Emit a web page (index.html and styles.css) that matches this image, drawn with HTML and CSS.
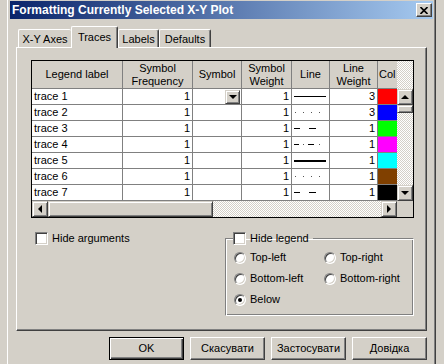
FILE: index.html
```html
<!DOCTYPE html>
<html lang="en">
<head>
    <meta charset="UTF-8">
    <title>Formatting Currently Selected X-Y Plot</title>
    <link rel="stylesheet" href="styles.css">
</head>
<body>
<div class="window">
    <div class="titlebar">
        <span class="title">Formatting Currently Selected X-Y Plot</span>
        <span class="close">
            <svg width="8" height="7" viewBox="0 0 8 7"><path d="M0.5 0 L7.5 7 M7.5 0 L0.5 7" stroke="#000" stroke-width="1.6"/></svg>
        </span>
    </div>

    <div class="tabs">
        <div class="tab tab-xy">X-Y Axes</div>
        <div class="tab tab-traces active">Traces</div>
        <div class="tab tab-labels">Labels</div>
        <div class="tab tab-defaults">Defaults</div>
    </div>

    <div class="panel">
        <div class="grid">
            <div class="grid-main">
                <div class="cells">
                    <div class="hd">Legend label</div>
                    <div class="hd">Symbol<br>Frequency</div>
                    <div class="hd">Symbol</div>
                    <div class="hd">Symbol<br>Weight</div>
                    <div class="hd">Line</div>
                    <div class="hd">Line<br>Weight</div>
                    <div class="hd hd-cut">Col</div>

                    <div class="c">trace 1</div><div class="c num">1</div>
                    <div class="c sym"><span class="drop"><i class="arr-down"></i></span></div>
                    <div class="c num">1</div>
                    <div class="c ln"><svg width="36" height="15"><line x1="2" y1="7.5" x2="34" y2="7.5" stroke="#000"/></svg></div>
                    <div class="c num">3</div><div class="c swatch" style="background:#ff0000"></div>

                    <div class="c">trace 2</div><div class="c num">1</div><div class="c"></div><div class="c num">1</div>
                    <div class="c ln"><svg width="36" height="15"><g fill="#555"><rect x="3" y="7" width="1" height="1"/><rect x="11" y="7" width="1" height="1"/><rect x="19" y="7" width="1" height="1"/><rect x="27" y="7" width="1" height="1"/></g></svg></div>
                    <div class="c num">3</div><div class="c swatch" style="background:#0000ff"></div>

                    <div class="c">trace 3</div><div class="c num">1</div><div class="c"></div><div class="c num">1</div>
                    <div class="c ln"><svg width="36" height="15"><g fill="#000"><rect x="2" y="7" width="6" height="1"/><rect x="17" y="7" width="7" height="1"/></g></svg></div>
                    <div class="c num">1</div><div class="c swatch" style="background:#00ff00"></div>

                    <div class="c">trace 4</div><div class="c num">1</div><div class="c"></div><div class="c num">1</div>
                    <div class="c ln"><svg width="36" height="15"><g fill="#000"><rect x="2" y="7" width="5" height="1"/><rect x="16" y="7" width="6" height="1"/></g><g fill="#555"><rect x="11" y="7" width="1" height="1"/><rect x="27" y="7" width="1" height="1"/></g></svg></div>
                    <div class="c num">1</div><div class="c swatch" style="background:#ff00ff"></div>

                    <div class="c">trace 5</div><div class="c num">1</div><div class="c"></div><div class="c num">1</div>
                    <div class="c ln"><svg width="36" height="15"><rect x="2" y="7" width="32" height="2" fill="#000"/></svg></div>
                    <div class="c num">1</div><div class="c swatch" style="background:#00ffff"></div>

                    <div class="c">trace 6</div><div class="c num">1</div><div class="c"></div><div class="c num">1</div>
                    <div class="c ln"><svg width="36" height="15"><g fill="#555"><rect x="3" y="7" width="1" height="1"/><rect x="11" y="7" width="1" height="1"/><rect x="19" y="7" width="1" height="1"/><rect x="27" y="7" width="1" height="1"/></g></svg></div>
                    <div class="c num">1</div><div class="c swatch" style="background:#804000"></div>

                    <div class="c">trace 7</div><div class="c num">1</div><div class="c"></div><div class="c num">1</div>
                    <div class="c ln"><svg width="36" height="15"><g fill="#000"><rect x="2" y="7" width="6" height="1"/><rect x="17" y="7" width="7" height="1"/></g></svg></div>
                    <div class="c num">1</div><div class="c swatch" style="background:#000000"></div>
                </div>
                <div class="vscroll">
                    <div class="track top-track"></div>
                    <span class="sbtn"><i class="arr-up"></i></span>
                    <span class="thumb-v"></span>
                    <div class="track"></div>
                    <span class="sbtn"><i class="arr-down"></i></span>
                </div>
            </div>
            <div class="hscroll">
                <span class="sbtn"><i class="arr-left"></i></span>
                <span class="thumb-h"></span>
                <div class="track"></div>
                <span class="sbtn"><i class="arr-right"></i></span>
                <span class="corner"></span>
            </div>
        </div>

        <div class="options">
            <label class="check"><span class="box"></span>Hide arguments</label>
            <fieldset class="group">
                <legend class="check"><span class="box"></span>Hide legend</legend>
                <div class="radios">
                    <label class="radio"><span class="dot"></span>Top-left</label>
                    <label class="radio"><span class="dot"></span>Top-right</label>
                    <label class="radio"><span class="dot"></span>Bottom-left</label>
                    <label class="radio"><span class="dot"></span>Bottom-right</label>
                    <label class="radio"><span class="dot on"></span>Below</label>
                </div>
            </fieldset>
        </div>
    </div>

    <div class="buttons">
        <span class="btn default">OK</span>
        <span class="btn">Скасувати</span>
        <span class="btn">Застосувати</span>
        <span class="btn">Довідка</span>
    </div>
</div>
</body>
</html>
```

FILE: styles.css
```css
body {
    margin: 0;
    background-color: #d4d0c8;
    font-family: "Liberation Sans", Arial, sans-serif;
    font-size: 11px;
    line-height: 13px;
    color: #000;
}

.window {
    margin-left: 7px;
    width: 429px;
    height: 364px;
    box-sizing: border-box;
    border-left: 1px solid #fff;
    border-right: 1px solid #404040;
    box-shadow: inset -1px 0 #808080;
    padding: 1px 2px 0 2px;
}

.titlebar {
    height: 18px;
    display: flex;
    align-items: center;
    justify-content: space-between;
    background: linear-gradient(to right, #0a246a, #a6caf0);
}

.title {
    color: #fff;
    font-weight: bold;
    font-size: 12px;
    padding-left: 2px;
}

.close {
    width: 16px;
    height: 14px;
    margin-right: 1px;
    box-sizing: border-box;
    display: flex;
    align-items: center;
    justify-content: center;
    background-color: #d4d0c8;
    border: 1px solid;
    border-color: #fff #404040 #404040 #fff;
    box-shadow: inset -1px -1px #808080;
}

/* tabs */
.tabs {
    display: flex;
    align-items: flex-end;
    height: 21px;
    margin: 7px 0 0 8px;
}

.tab {
    height: 18px;
    box-sizing: border-box;
    text-align: center;
    padding-top: 3px;
    border-top: 1px solid #fff;
    border-left: 1px solid #fff;
    border-right: 1px solid #404040;
    box-shadow: inset -1px 0 #808080;
    border-radius: 2px 2px 0 0;
}

.tab-xy { width: 53px; border-right: none; box-shadow: none; }
.tab-traces { width: 47px; }
.tab-labels { width: 41px; }
.tab-defaults { width: 52px; }

.tab.active {
    height: 22px;
    margin-bottom: -1px;
    padding-top: 4px;
    background-color: #d4d0c8;
    position: relative;
    z-index: 1;
}

.panel {
    margin-left: 6px;
    width: 411px;
    height: 284px;
    box-sizing: border-box;
    border: 1px solid;
    border-color: #fff #404040 #404040 #fff;
    box-shadow: inset -1px -1px #808080;
    padding: 12px 0 0 14px;
}

/* grid */
.grid {
    width: 383px;
    border: 1px solid #000;
    box-sizing: border-box;
}

.grid-main {
    display: flex;
}

.cells {
    display: grid;
    grid-template-columns: 90px 69px 48px 49px 37px 47px 19px;
    grid-template-rows: 27px repeat(7, 15px);
    gap: 1px;
    padding-bottom: 1px;
    background-color: #808080;
    width: 365px;
}

.hd {
    background-color: #d4d0c8;
    display: flex;
    align-items: center;
    justify-content: center;
    text-align: center;
    white-space: nowrap;
}

.hd-cut {
    justify-content: flex-start;
    padding-left: 1px;
}

.c {
    background-color: #fff;
    padding-left: 2px;
    line-height: 15px;
    white-space: nowrap;
    overflow: hidden;
}

.c.num {
    text-align: right;
    padding: 0 2px 0 0;
}

.c.sym {
    display: flex;
    justify-content: flex-end;
    align-items: center;
    padding-right: 1px;
}

.c.ln {
    padding: 0;
}

.c.ln svg {
    display: block;
}

.c.swatch {
    padding: 0;
}

.drop, .sbtn {
    box-sizing: border-box;
    display: flex;
    align-items: center;
    justify-content: center;
    background-color: #d4d0c8;
    border: 1px solid;
    border-color: #d4d0c8 #404040 #404040 #d4d0c8;
    box-shadow: inset 1px 1px #fff, inset -1px -1px #808080;
}

.drop {
    width: 15px;
    height: 14px;
}

.arr-down, .arr-up, .arr-left, .arr-right {
    width: 0;
    height: 0;
    border: 4px solid transparent;
}

.arr-down { border-top-color: #000; border-bottom-width: 0; }
.arr-up { border-bottom-color: #000; border-top-width: 0; }
.arr-left { border-right-color: #000; border-left-width: 0; }
.arr-right { border-left-color: #000; border-right-width: 0; }

.vscroll {
    width: 16px;
    display: flex;
    flex-direction: column;
}

.vscroll .sbtn {
    height: 16px;
}

.track {
    flex: 1;
    background: repeating-conic-gradient(#fff 0 25%, #d4d0c8 0 50%) 0 0 / 2px 2px;
}

.top-track {
    flex: none;
    height: 28px;
}

.thumb-v {
    height: 8px;
    box-sizing: border-box;
    background-color: #d4d0c8;
    border: 1px solid;
    border-color: #d4d0c8 #404040 #404040 #d4d0c8;
    box-shadow: inset 1px 1px #fff, inset -1px -1px #808080;
}

.hscroll {
    display: flex;
    height: 16px;
}

.hscroll .sbtn {
    width: 16px;
}

.thumb-h {
    width: 165px;
    box-sizing: border-box;
    background-color: #d4d0c8;
    border: 1px solid;
    border-color: #d4d0c8 #404040 #404040 #d4d0c8;
    box-shadow: inset 1px 1px #fff, inset -1px -1px #808080;
}

.corner {
    width: 16px;
    background-color: #d4d0c8;
}

/* options below grid */
.options {
    display: flex;
    margin-top: 14px;
}

.check, .radio {
    display: flex;
    align-items: center;
    gap: 4px;
    white-space: nowrap;
}

.options > .check {
    align-self: flex-start;
    margin-left: 4px;
    height: 13px;
}

.box {
    width: 13px;
    height: 13px;
    box-sizing: border-box;
    background-color: #fff;
    border: 1px solid;
    border-color: #808080 #fff #fff #808080;
    box-shadow: inset 1px 1px #404040, inset -1px -1px #d4d0c8;
}

.group {
    margin: 0 0 0 auto;
    margin-right: 12px;
    width: 189px;
    height: 84px;
    box-sizing: border-box;
    padding: 0 0 0 8px;
    border: 1px solid #808080;
    border-right-color: #fff;
    border-bottom-color: #fff;
    box-shadow: inset 1px 1px #fff, inset -1px -1px #808080;
}

.group legend {
    padding: 0 4px 0 0;
    margin-left: -1px;
    height: 13px;
}

.radios {
    display: grid;
    grid-template-columns: 90px auto;
    grid-auto-rows: 21px;
    margin-top: 2px;
}

.dot {
    width: 12px;
    height: 12px;
    box-sizing: border-box;
    border-radius: 50%;
    background-color: #fff;
    border: 1px solid;
    border-color: #808080 #fff #fff #808080;
    box-shadow: inset 1px 1px #404040, inset -1px -1px #d4d0c8;
    display: flex;
    align-items: center;
    justify-content: center;
}

.dot.on::after {
    content: "";
    width: 4px;
    height: 4px;
    border-radius: 50%;
    background-color: #000;
}

/* bottom buttons */
.buttons {
    display: flex;
    justify-content: flex-end;
    gap: 6px;
    margin: 6px 6px 0 0;
}

.btn {
    width: 75px;
    height: 23px;
    box-sizing: border-box;
    display: flex;
    align-items: center;
    justify-content: center;
    background-color: #d4d0c8;
    border: 1px solid;
    border-color: #fff #404040 #404040 #fff;
    box-shadow: inset -1px -1px #808080;
}

.btn.default {
    border: 1px solid #000;
    box-shadow: inset 1px 1px #fff, inset -1px -1px #404040, inset -2px -2px #808080;
}
```
